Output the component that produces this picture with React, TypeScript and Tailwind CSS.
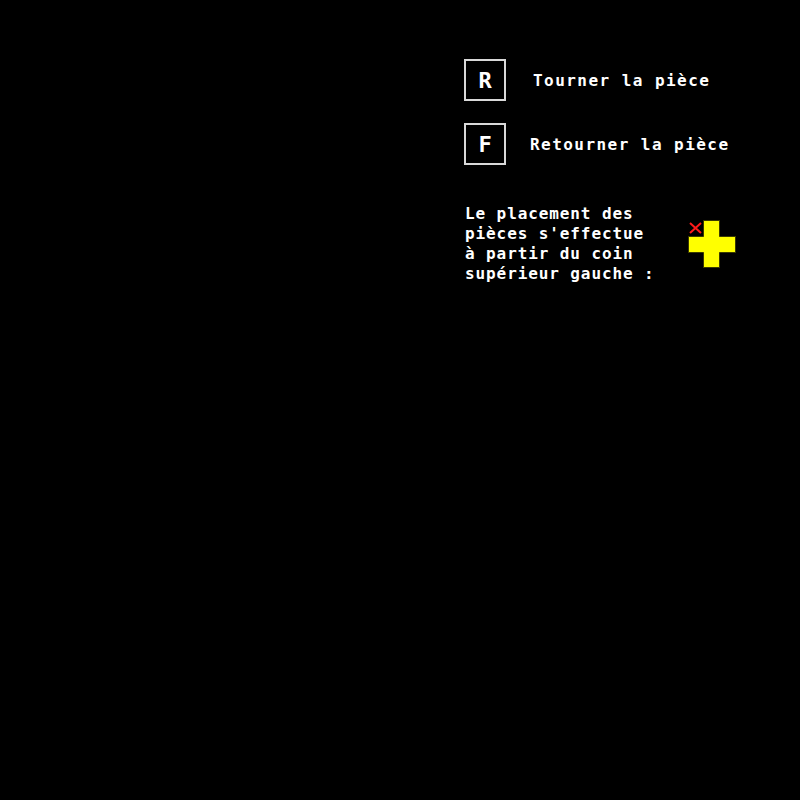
const mono = "font-['DejaVu_Sans_Mono','Liberation_Mono',monospace]";

function KeyHint({ keyName, label, gap }: { keyName: string; label: string; gap: string }) {
  return (
    <div className="flex items-center">
      <div className="flex h-[42px] w-[42px] items-center justify-center border-2 border-[#d9d9d9] text-[22px] font-bold text-white">
        <span className={mono}>{keyName}</span>
      </div>
      <span className={`${gap} ${mono} pt-px text-[16px] font-bold tracking-[1.45px] text-white`}>{label}</span>
    </div>
  );
}

function PieceOrigin() {
  return (
    <svg width="48" height="48" viewBox="0 0 48 48" className="shrink-0">
      <path
        d="M15.5 0.5 H31.5 V16.5 H47.5 V32.5 H31.5 V47.5 H15.5 V32.5 H0.5 V16.5 H15.5 Z"
        fill="#ffff00"
        stroke="#3a3a00"
        strokeWidth="1"
      />
      <path d="M2 3 L13 13 M13 3 L2 13" stroke="#ff1a1a" strokeWidth="2" />
    </svg>
  );
}

export default function App() {
  return (
    <div className="h-[800px] w-[800px] bg-black">
      <div className="flex flex-col pl-[464px] pt-[59px]">
        <KeyHint keyName="R" label="Tourner la pièce" gap="ml-[27px]" />
        <div className="mt-[22px]">
          <KeyHint keyName="F" label="Retourner la pièce" gap="ml-[24px]" />
        </div>

        <div className="mt-[39px] flex items-start">
          <p className={`${mono} w-[224px] pl-px text-[16px] font-bold leading-[20px] tracking-[0.9px] text-white`}>
            Le placement des
            <br />
            pièces s'effectue
            <br />
            à partir du coin
            <br />
            supérieur gauche :
          </p>
          <div className="mt-[16px]">
            <PieceOrigin />
          </div>
        </div>
      </div>
    </div>
  );
}
